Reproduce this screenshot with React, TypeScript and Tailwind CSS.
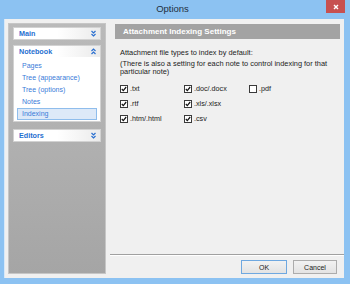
import React from "react";

const font = "font-['Liberation_Sans',Arial,sans-serif]";

function Chevrons({ up }: { up?: boolean }) {
  return (
    <svg width="7" height="7" viewBox="0 0 7 7" className={up ? "rotate-180" : ""}>
      <polyline points="1.5,1 3.5,3 5.5,1" fill="none" stroke="#2a6fd0" strokeWidth="1.2" />
      <polyline points="1.5,4 3.5,6 5.5,4" fill="none" stroke="#2a6fd0" strokeWidth="1.2" />
    </svg>
  );
}

function SectionHeader({ title, up }: { title: string; up?: boolean }) {
  return (
    <div className="h-[11px] flex items-center justify-between pl-[5px] pr-[3px] bg-gradient-to-r from-white via-white to-[#ebebeb]">
      <span className="text-[7.2px] font-bold text-[#1f6fd0] leading-none">{title}</span>
      <Chevrons up={up} />
    </div>
  );
}

function Check({ label, checked }: { label: string; checked: boolean }) {
  return (
    <div className="flex items-center h-[15px]">
      <div className="w-[8px] h-[8px] border border-[#3a3a3a] bg-white flex items-center justify-center">
        {checked && (
          <svg width="6" height="6" viewBox="0 0 6 6">
            <polyline points="0.8,3 2.3,4.6 5.2,1" fill="none" stroke="#111" strokeWidth="1.2" />
          </svg>
        )}
      </div>
      <span className="ml-[2px] text-[7.2px] text-[#222] leading-none">{label}</span>
    </div>
  );
}

export default function App() {
  const items = ["Pages", "Tree (appearance)", "Tree (options)", "Notes"];

  return (
    <div className={`w-[350px] h-[284px] bg-[#8cc2f2] flex flex-col ${font}`}>
      {/* title bar */}
      <div className="h-[19px] flex items-start">
        <div className="flex-1" />
        <div className="h-[19px] flex items-center text-[9.5px] text-[#1f2f40]">Options</div>
        <div className="flex-1 flex justify-end pr-[5px]">
          <div className="w-[19px] h-[13px] bg-[#c75050] flex items-center justify-center">
            <svg width="6" height="6" viewBox="0 0 6 6">
              <path d="M1 1 L5 5 M5 1 L1 5" stroke="white" strokeWidth="1.4" />
            </svg>
          </div>
        </div>
      </div>

      {/* client area */}
      <div className="flex-1 ml-[4px] mr-[6px] mb-[6px] bg-[#f0f0f0] border-l border-[#d6e8f9] flex pt-[4px] pl-[3px] pb-[4px]">
        {/* left nav */}
        <div className="w-[98px] border border-[#c6c6c6] bg-gradient-to-b from-[#bababa] to-[#a5a5a5] px-[4px] pt-[3px]">
          <div className="border border-[#d2d2d2] bg-white">
            <SectionHeader title="Main" />
          </div>

          <div className="mt-[5px] border border-[#d2d2d2] bg-white pb-[1px]">
            <SectionHeader title="Notebook" up />
            <div className="pt-[3px]">
              {items.map((it) => (
                <div key={it} className="h-[12px] flex items-center pl-[8px] text-[7px] text-[#3a7bd9]">
                  {it}
                </div>
              ))}
              <div className="mx-[3px] h-[12px] flex items-center pl-[4px] border border-[#8fbdec] bg-[#dde9f8] text-[7px] text-[#3a7bd9]">
                Indexing
              </div>
            </div>
          </div>

          <div className="mt-[7px] border border-[#d2d2d2] bg-white">
            <SectionHeader title="Editors" />
          </div>
        </div>

        {/* right side */}
        <div className="flex-1 flex flex-col">
          <div className="ml-[9px] mr-[4px] mt-[1px] h-[15px] bg-[#a3a3a3] pl-[8px] flex items-center">
            <span className="text-[8px] font-bold text-white leading-none">Attachment Indexing Settings</span>
          </div>

          <div className="pl-[14px] text-[7.4px] text-[#222] leading-[8px]">
            <div className="mt-[10px]">Attachment file types to index by default:</div>
            <div className="mt-[3px]">
              (There is also a setting for each note to control indexing for that
              <br />
              particular note)
            </div>

            <div className="mt-[5px] grid grid-cols-[64px_65px_auto]">
              <Check label=".txt" checked />
              <Check label=".doc/.docx" checked />
              <Check label=".pdf" checked={false} />
              <Check label=".rtf" checked />
              <Check label=".xls/.xlsx" checked />
              <div />
              <Check label=".htm/.html" checked />
              <Check label=".csv" checked />
            </div>
          </div>

          <div className="flex-1" />

          <div className="ml-[4px] h-[2px] border-t border-[#a0a0a0] border-b border-b-white" />

          <div className="mt-[4px] mr-[7px] flex justify-end gap-[6px]">
            <button className="w-[46px] h-[14px] border border-[#6fa8e0] bg-gradient-to-b from-[#f2f2f2] to-[#e3e3e3] text-[7px] text-[#222] leading-none">
              OK
            </button>
            <button className="w-[44px] h-[14px] border border-[#acacac] bg-gradient-to-b from-[#f2f2f2] to-[#e3e3e3] text-[7px] text-[#222] leading-none">
              Cancel
            </button>
          </div>
        </div>
      </div>
    </div>
  );
}
